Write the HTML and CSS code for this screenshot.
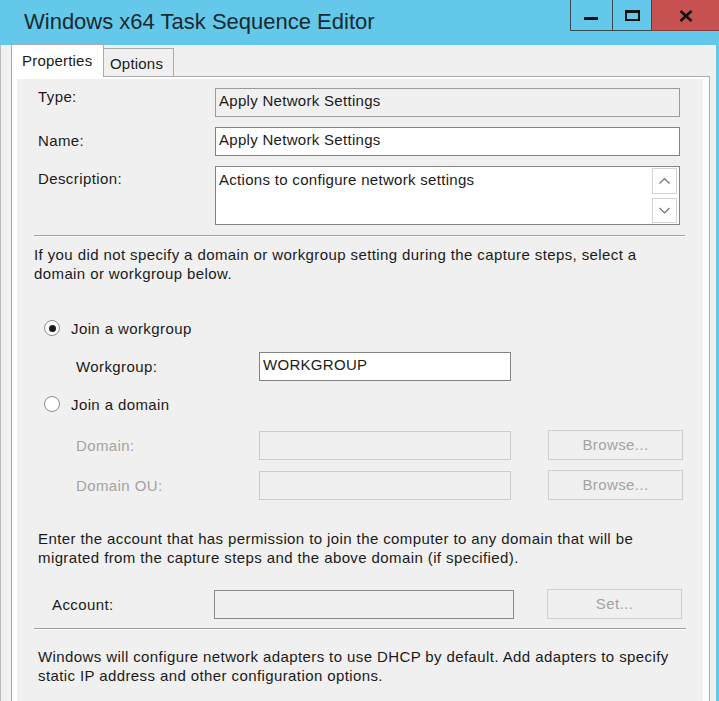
FILE: index.html
```html
<!DOCTYPE html>
<html>
<head>
<meta charset="utf-8">
<title>Windows x64 Task Sequence Editor</title>
<link rel="stylesheet" href="styles.css">
</head>
<body>
<div class="window">
  <header class="titlebar">
    <div class="title">Windows x64 Task Sequence Editor</div>
    <div class="controls">
      <div class="ctl min"><span class="min-bar"></span></div>
      <div class="ctl max"><span class="max-box"></span></div>
      <div class="ctl close">
        <svg width="14" height="12" viewBox="0 0 14 12"><path d="M1.5 1 L12.5 11 M12.5 1 L1.5 11" stroke="#111" stroke-width="2.6" fill="none"/></svg>
      </div>
    </div>
  </header>
  <div class="body">
    <div class="tabs">
      <div class="tab active">Properties</div>
      <div class="tab">Options</div>
    </div>
    <div class="panel">
      <div class="page">
        <div class="fields">
          <div class="lbl lbl-type">Type:</div>
          <div class="box ro">Apply Network Settings</div>
          <div class="lbl lbl-name">Name:</div>
          <div class="box">Apply Network Settings</div>
          <div class="lbl lbl-desc">Description:</div>
          <div class="box desc">
            <span class="desc-text">Actions to configure network settings</span>
            <div class="scroll">
              <div class="sbtn"><svg width="23" height="24" viewBox="0 0 23 24"><polyline points="6.5,14.5 11.5,9.5 16.5,14.5" fill="none" stroke="#707070" stroke-width="1.2"/></svg></div>
              <div class="sbtn"><svg width="23" height="23" viewBox="0 0 23 23"><polyline points="6.5,9 11.5,14 16.5,9" fill="none" stroke="#707070" stroke-width="1.2"/></svg></div>
            </div>
          </div>
        </div>
        <div class="sep"></div>
        <p class="note note-a">If you did not specify a domain or workgroup setting during the capture steps, select a<br>domain or workgroup below.</p>

        <div class="radio-row r1"><span class="radio checked"></span><span>Join a workgroup</span></div>
        <div class="sub-row wg">
          <div class="sub-lbl">Workgroup:</div>
          <div class="box input">WORKGROUP</div>
        </div>
        <div class="radio-row r2"><span class="radio"></span><span>Join a domain</span></div>
        <div class="sub-row dom">
          <div class="sub-lbl disabled">Domain:</div>
          <div class="box input off"></div>
          <div class="btn">Browse...</div>
        </div>
        <div class="sub-row ou">
          <div class="sub-lbl disabled">Domain OU:</div>
          <div class="box input off"></div>
          <div class="btn">Browse...</div>
        </div>

        <p class="note note-b">Enter the account that has permission to join the computer to any domain that will be<br>migrated from the capture steps and the above domain (if specified).</p>

        <div class="acct-row">
          <div class="acct-lbl">Account:</div>
          <div class="box acct"></div>
          <div class="btn acct-btn">Set...</div>
        </div>
        <div class="sep sep2"></div>
        <p class="note note-c">Windows will configure network adapters to use DHCP by default. Add adapters to specify<br>static IP address and other configuration options.</p>
      </div>
    </div>
  </div>
</div>
</body>
</html>
```

FILE: styles.css
```css
html, body {
  margin: 0;
  padding: 0;
  width: 719px;
  height: 701px;
  overflow: hidden;
  background: #f0f0f0;
}

body {
  font-family: "Liberation Sans", Arial, sans-serif;
  font-size: 15px;
  line-height: 19px;
  letter-spacing: 0.4px;
  color: #1a1a1a;
}

.window {
  width: 719px;
  height: 701px;
  display: flex;
  flex-direction: column;
}

/* title bar */
.titlebar {
  height: 45px;
  background: #63c8ea;
  display: flex;
  flex-shrink: 0;
}

.title {
  flex: 1;
  padding-left: 24px;
  padding-top: 8px;
  font-size: 22px;
  line-height: 27px;
  letter-spacing: 0;
  color: #1b2a30;
}

.controls {
  display: flex;
  height: 31px;
}

.ctl {
  box-sizing: border-box;
  height: 31px;
  border-left: 1px solid #3a4a52;
  border-bottom: 1px solid #3a4a52;
  display: flex;
  justify-content: center;
}

.min { width: 42px; }
.max { width: 39px; }
.close {
  width: 68px;
  background: #c75050;
  border-bottom-color: #8c3a3a;
  align-items: flex-start;
  padding-top: 10px;
}

.min-bar {
  width: 14px;
  height: 3px;
  background: #111;
  margin-top: 17px;
  margin-left: -1px;
}

.max-box {
  box-sizing: border-box;
  width: 15px;
  height: 11px;
  border: 2px solid #111;
  border-top-width: 3px;
  margin-top: 10px;
}

/* body */
.body {
  flex: 1;
  border-left: 1px solid #b9b9b9;
  border-right: 3px solid #63c8ea;
  padding: 0 6px 0 10px;
  display: flex;
  flex-direction: column;
  min-height: 0;
}

.tabs {
  display: flex;
  align-items: flex-end;
  height: 32px;
  position: relative;
  z-index: 1;
  margin-bottom: -1px;
}

.tab {
  box-sizing: border-box;
  border: 1px solid #acacac;
  border-bottom: none;
  background: #f0f0f0;
  height: 28px;
  width: 71px;
  padding-left: 6px;
  padding-top: 5px;
  margin-bottom: 1px;
  letter-spacing: 0.2px;
}

.tab.active {
  background: #ffffff;
  height: 33px;
  width: 93px;
  padding-left: 10px;
  padding-top: 6px;
  margin-bottom: 0;
  margin-right: -1px;
}

.panel {
  flex: 1;
  border: 1px solid #acacac;
  border-bottom: none;
  background: #ffffff;
  padding: 2px 6px 0 5px;
  display: flex;
  min-height: 0;
}

.page {
  flex: 1;
  background: #f0f0f0;
  padding-top: 9px;
}

/* top fields */
.fields {
  display: grid;
  grid-template-columns: 198px 465px;
  row-gap: 10px;
  align-items: start;
}

.lbl {
  padding-left: 21px;
}

.lbl-type { margin-top: -1px; }
.lbl-name { margin-top: 4px; }
.lbl-desc { margin-top: 3px; }

.box {
  box-sizing: border-box;
  height: 29px;
  border: 1px solid #828282;
  background: #ffffff;
  padding: 2px 3px 0;
  white-space: nowrap;
  letter-spacing: 0.3px;
}

.box.ro {
  background: #f0f0f0;
  border-color: #9a9a9a;
}

.box.desc {
  height: 59px;
  display: flex;
  justify-content: space-between;
  padding-top: 3px;
  padding-right: 2px;
}

.scroll {
  display: flex;
  flex-direction: column;
  gap: 4px;
  margin-top: -2px;
}

.sbtn {
  box-sizing: border-box;
  width: 25px;
  height: 26px;
  border: 1px solid #d4d4d4;
  background: #ffffff;
  display: flex;
}

.sbtn + .sbtn { height: 25px; }

.sep {
  margin: 10px 0 0 17px;
  width: 651px;
  height: 0;
  border-top: 1px solid #a0a0a0;
  border-bottom: 1px solid #ffffff;
}

.note {
  margin: 0;
  white-space: nowrap;
}

.note-a {
  margin-top: 8px;
  padding-left: 17px;
}

/* radios */
.radio-row {
  display: flex;
  align-items: center;
  height: 20px;
  padding-left: 27px;
}

.r1 { margin-top: 35px; }
.r2 { margin-top: 13px; }

.radio {
  box-sizing: border-box;
  width: 16px;
  height: 16px;
  border-radius: 50%;
  border: 1.5px solid #8a8a8a;
  background: #ffffff;
  margin-right: 11px;
  display: flex;
  align-items: center;
  justify-content: center;
}

.radio.checked::after {
  content: "";
  width: 7px;
  height: 7px;
  border-radius: 50%;
  background: #1a1a1a;
}

.sub-row {
  display: flex;
  align-items: center;
}

.wg { margin-top: 14px; }
.dom { margin-top: 16px; }
.ou { margin-top: 10px; }

.sub-lbl {
  box-sizing: border-box;
  width: 242px;
  padding-left: 59px;
}

.box.input {
  width: 252px;
}

.disabled {
  color: #a3a3a3;
}

.box.off {
  background: #f0f0f0;
  border-color: #cccccc;
}

.btn {
  box-sizing: border-box;
  width: 135px;
  height: 30px;
  margin-left: 37px;
  border: 1px solid #cfcfcf;
  background: #f0f0f0;
  color: #a3a3a3;
  text-align: center;
  line-height: 28px;
}

.note-b {
  margin-top: 29px;
  padding-left: 21px;
}

.acct-row {
  display: flex;
  align-items: center;
  margin-top: 22px;
}

.acct-lbl {
  box-sizing: border-box;
  width: 197px;
  padding-left: 35px;
}

.box.acct {
  width: 300px;
  background: #f0f0f0;
  border-color: #8a8a8a;
}

.btn.acct-btn {
  margin-left: 33px;
}

.sep2 {
  margin-top: 9px;
  width: 652px;
}

.note-c {
  margin-top: 17px;
  padding-left: 21px;
}
```
